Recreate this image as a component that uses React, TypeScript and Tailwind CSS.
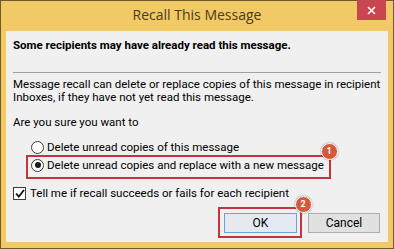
import React from 'react'

const font = { fontFamily: 'Roboto, "Noto Sans", sans-serif' }

function Radio({ checked }: { checked?: boolean }) {
  return (
    <span className="flex h-[13px] w-[13px] shrink-0 items-center justify-center rounded-full border border-[#3c3c3c] bg-white">
      {checked && <span className="h-[6px] w-[6px] rounded-full bg-[#1a1a1a]" />}
    </span>
  )
}

function Badge({ n }: { n: number }) {
  return (
    <span className="flex h-[17px] w-[17px] items-center justify-center rounded-full border-[1.5px] border-white bg-[#d6573a] text-[9px] font-bold leading-none text-white shadow-[0_0_2px_rgba(0,0,0,0.45)]">
      {n}
    </span>
  )
}

export default function App() {
  return (
    <div
      className="relative flex h-[249px] w-[394px] flex-col border border-[#6d5a2b] bg-[#f1c967] text-black"
      style={font}
    >
      {/* title bar */}
      <div className="flex h-[30px] shrink-0 items-center justify-center pb-[2px]">
        <span className="text-[14px] leading-none text-[#4b3c1a]" style={{ fontFamily: '"Open Sans", sans-serif' }}>
          Recall This Message
        </span>
      </div>
      <button className="absolute right-[7px] top-[-1px] flex h-[20px] w-[29px] items-center justify-center bg-[#c8464f]">
        <svg width="9" height="9" viewBox="0 0 9 9">
          <path d="M1 1 L8 8 M8 1 L1 8" stroke="white" strokeWidth="1.6" />
        </svg>
      </button>

      {/* body */}
      <div className="mx-[5px] flex h-[211px] flex-col border border-[#fbf0d2] bg-[#f0f0f0] pl-[6px] pr-[6px] pt-[5px] text-[11.5px]">
        <p className="font-bold leading-[16px]">Some recipients may have already read this message.</p>
        <div className="mt-[19px] h-px bg-[#a0a0a0]" />
        <p className="mt-[5px] whitespace-nowrap leading-[13px]">
          Message recall can delete or replace copies of this message in recipient
          <br />
          Inboxes, if they have not yet read this message.
        </p>
        <p className="mt-[10px] leading-[16px]">Are you sure you want to</p>

        <div className="ml-[18px] mt-[9px] flex h-[16px] items-center gap-[3px] leading-[16px]">
          <Radio />
          <span>Delete unread copies of this message</span>
        </div>

        <div className="relative ml-[13px] w-[305px] border-2 border-[#c4343f] pb-[4px] pl-[3px]">
          <div className="flex h-[16px] items-center gap-[3px] leading-[16px]">
            <Radio checked />
            <span className="whitespace-nowrap">Delete unread copies and replace with a new message</span>
          </div>
          <span className="absolute right-[-8.5px] top-[-14.5px]">
            <Badge n={1} />
          </span>
        </div>

        <div className="mt-[6px] flex h-[16px] items-center gap-[4px] leading-[16px]">
          <span className="flex h-[13px] w-[13px] shrink-0 items-center justify-center border border-[#3c3c3c] bg-white">
            <svg width="10" height="9" viewBox="0 0 10 9">
              <path d="M1 4.5 L3.8 7.5 L9 1" fill="none" stroke="#111" strokeWidth="1.8" />
            </svg>
          </span>
          <span>Tell me if recall succeeds or fails for each recipient</span>
        </div>

        <div className="mt-[6px] flex items-start justify-end pr-[1px]">
          <div className="relative border-2 border-[#c4343f] pb-[3px] pl-[4px] pr-[3px] pt-[4px]">
            <button className="h-[20px] w-[73px] border border-[#6fa3d6] bg-[#e5eaf0] text-[12px] leading-none">
              OK
            </button>
            <span className="absolute right-[-11.5px] top-[-13.5px]">
              <Badge n={2} />
            </span>
          </div>
          <button className="ml-[6px] mt-[6px] h-[20px] w-[72px] border border-[#adadad] bg-[#e1e1e1] text-[12px] leading-none">
            Cancel
          </button>
        </div>
      </div>
    </div>
  )
}
